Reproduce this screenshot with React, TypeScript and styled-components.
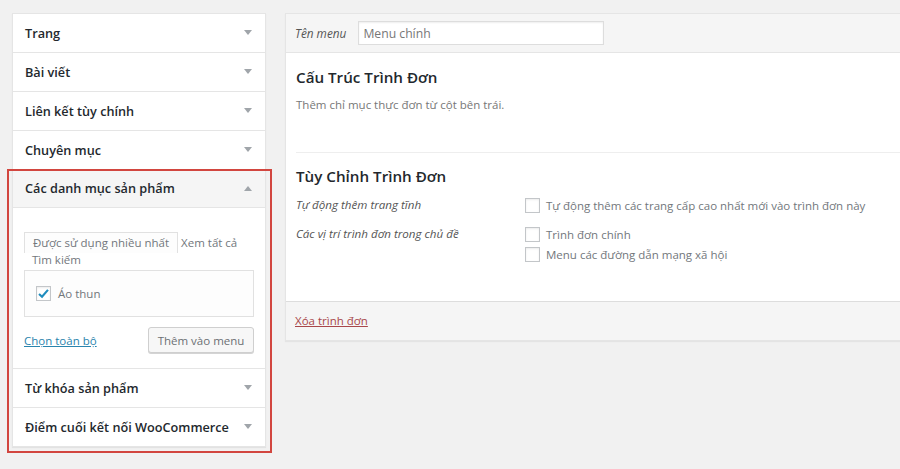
import React from "react";
import styled, { createGlobalStyle } from "styled-components";

const Global = createGlobalStyle`
  html, body { margin: 0; padding: 0; background: #f1f1f1; }
  body { font-family: "Open Sans", "Noto Sans", sans-serif; overflow: hidden; }
  * { box-sizing: border-box; }
`;

const Page = styled.div`
  width: 900px;
  height: 469px;
  overflow: hidden;
  display: flex;
  align-items: flex-start;
  gap: 19px;
  padding: 13px 0 0 12px;
  background: #f1f1f1;
`;

const LeftColumn = styled.div`
  position: relative;
  flex: 0 0 254px;
`;

const Accordion = styled.div`
  background: #fff;
  border: 1px solid #e5e5e5;
  box-shadow: 0 1px 1px rgba(0, 0, 0, 0.06);
`;

const Section = styled.div`
  border-bottom: 1px solid #e5e5e5;
  &:last-child { border-bottom: none; }
`;

const SectionHeader = styled.div<{ $open?: boolean }>`
  height: 38px;
  display: flex;
  align-items: center;
  justify-content: space-between;
  padding: 0 13px 1px 12px;
  background: ${(p) => (p.$open ? "#f5f5f5" : "#fff")};
  border-bottom: ${(p) => (p.$open ? "1px solid #e5e5e5" : "none")};
  font-size: 12.7px;
  font-weight: 600;
  color: #23282d;
  white-space: nowrap;
`;

const Arrow = styled.svg<{ $up?: boolean }>`
  width: 8px;
  height: 5px;
  transform: ${(p) => (p.$up ? "rotate(180deg)" : "none")};
  fill: #a0a5aa;
`;

const SectionBody = styled.div`
  height: 160px;
  padding: 26px 11px 0 11px;
`;

const Tabs = styled.div`
  font-size: 11.5px;
  line-height: 17px;
  padding-left: 8px;
  color: #72777c;
`;

const Tab = styled.span<{ $active?: boolean }>`
  white-space: nowrap;
  ${(p) =>
    p.$active
      ? `
    margin-left: -8px;
    padding: 2px 8px 3px 8px;
    border: 1px solid #e1e1e1;
    border-bottom: none;
    background: #fdfdfd;
  `
      : ""}
`;

const ListBox = styled.div`
  margin-top: 2px;
  height: 47px;
  border: 1px solid #e1e1e1;
  background: #fdfdfd;
  display: flex;
  align-items: center;
  padding-left: 11px;
  gap: 7px;
  font-size: 11.5px;
  color: #72777c;
`;

const CheckBox = styled.span`
  width: 15px;
  height: 15px;
  flex: 0 0 15px;
  border: 1px solid #c3c6c9;
  background: #fff;
  box-shadow: inset 0 1px 2px rgba(0, 0, 0, 0.08);
  display: inline-flex;
  align-items: center;
  justify-content: center;
`;

const ActionRow = styled.div`
  margin-top: 10px;
  display: flex;
  align-items: center;
  justify-content: space-between;
`;

const SelectAll = styled.a`
  font-size: 11.5px;
  color: #2a84ad;
  text-decoration: underline;
  cursor: pointer;
`;

const Button = styled.button`
  height: 26px;
  width: 106px;
  padding: 0;
  font-family: inherit;
  font-size: 11.5px;
  color: #6c7074;
  background: #f7f7f7;
  border: 1px solid #cfcfcf;
  border-radius: 3px;
  box-shadow: 0 1px 0 #d4d4d4;
`;

const Highlight = styled.div`
  position: absolute;
  left: -5px;
  top: 156px;
  width: 265px;
  height: 284px;
  border: 2px solid #d2463f;
  pointer-events: none;
`;

const MenuPanel = styled.div`
  flex: 0 0 640px;
  background: #fff;
  border: 1px solid #e5e5e5;
  box-shadow: 0 1px 1px rgba(0, 0, 0, 0.05);
`;

const MenuHeader = styled.div`
  height: 39px;
  display: flex;
  align-items: center;
  gap: 12px;
  padding-left: 9px;
  background: #f5f5f5;
  border-bottom: 1px solid #e5e5e5;
`;

const FieldLabel = styled.label`
  font-size: 11.8px;
  font-style: italic;
  color: #555;
`;

const NameInput = styled.input`
  width: 246px;
  height: 24px;
  border: 1px solid #ddd;
  box-shadow: inset 0 1px 2px rgba(0, 0, 0, 0.07);
  background: #fff;
  padding: 0 4px;
  font-family: inherit;
  font-size: 12.2px;
  color: #777;
  outline: none;
`;

const MenuBody = styled.div`
  padding: 0 10px;
`;

const Block = styled.div<{ $divided?: boolean }>`
  border-top: ${(p) => (p.$divided ? "1px solid #eee" : "none")};
  padding: ${(p) => (p.$divided ? "12px 0 37px" : "13px 0 38px")};
`;

const Heading = styled.h3`
  margin: 0;
  font-size: 15.2px;
  line-height: 22px;
  font-weight: 600;
  color: #23282d;
`;

const Description = styled.p`
  margin: 8px 0 0;
  font-size: 11.5px;
  line-height: 18px;
  color: #777;
`;

const SettingsGrid = styled.div`
  margin-top: 8px;
  display: grid;
  grid-template-columns: 229px 1fr;
  row-gap: 9px;
`;

const SettingLabel = styled.div`
  font-size: 11.6px;
  line-height: 20px;
  font-style: italic;
  color: #555;
`;

const Options = styled.div`
  display: flex;
  flex-direction: column;
`;

const Option = styled.div`
  height: 20px;
  display: flex;
  align-items: center;
  gap: 6px;
  font-size: 11.5px;
  color: #72777c;
`;

const MenuFooter = styled.div`
  height: 39px;
  border-top: 1px solid #ddd;
  background: #f5f5f5;
  display: flex;
  align-items: center;
  padding: 0 9px 2px;
`;

const DeleteLink = styled.a`
  font-size: 11.5px;
  color: #a8474a;
  text-decoration: underline;
  cursor: pointer;
`;

const ArrowIcon = ({ up }: { up?: boolean }) => (
  <Arrow $up={up} viewBox="0 0 8 5">
    <polygon points="0,0 8,0 4,5" />
  </Arrow>
);

const Check = ({ checked }: { checked?: boolean }) => (
  <CheckBox>
    {checked && (
      <svg width="13" height="13" viewBox="0 0 16 16">
        <path d="M2.5 8.5 L6.2 12 L13.5 3.5" stroke="#1e8cbe" strokeWidth="2.6" fill="none" />
      </svg>
    )}
  </CheckBox>
);

const closedTop = ["Trang", "Bài viết", "Liên kết tùy chính", "Chuyên mục"];
const closedBottom = ["Từ khóa sản phẩm", "Điểm cuối kết nối WooCommerce"];

export default function App() {
  return (
    <>
      <Global />
      <Page>
        <LeftColumn>
          <Accordion>
            {closedTop.map((t) => (
              <Section key={t}>
                <SectionHeader>
                  {t}
                  <ArrowIcon />
                </SectionHeader>
              </Section>
            ))}
            <Section>
              <SectionHeader $open>
                Các danh mục sản phẩm
                <ArrowIcon up />
              </SectionHeader>
              <SectionBody>
                <Tabs>
                  <Tab $active>Được sử dụng nhiều nhất</Tab>{" "}
                  <Tab>Xem tất cả</Tab>{" "}
                  <Tab>Tìm kiếm</Tab>
                </Tabs>
                <ListBox>
                  <Check checked />
                  Áo thun
                </ListBox>
                <ActionRow>
                  <SelectAll>Chọn toàn bộ</SelectAll>
                  <Button>Thêm vào menu</Button>
                </ActionRow>
              </SectionBody>
            </Section>
            {closedBottom.map((t) => (
              <Section key={t}>
                <SectionHeader>
                  {t}
                  <ArrowIcon />
                </SectionHeader>
              </Section>
            ))}
          </Accordion>
          <Highlight />
        </LeftColumn>

        <MenuPanel>
          <MenuHeader>
            <FieldLabel>Tên menu</FieldLabel>
            <NameInput defaultValue="Menu chính" />
          </MenuHeader>
          <MenuBody>
            <Block>
              <Heading>Cấu Trúc Trình Đơn</Heading>
              <Description>Thêm chỉ mục thực đơn từ cột bên trái.</Description>
            </Block>
            <Block $divided>
              <Heading>Tùy Chỉnh Trình Đơn</Heading>
              <SettingsGrid>
                <SettingLabel>Tự động thêm trang tĩnh</SettingLabel>
                <Options>
                  <Option>
                    <Check />
                    Tự động thêm các trang cấp cao nhất mới vào trình đơn này
                  </Option>
                </Options>
                <SettingLabel>Các vị trí trình đơn trong chủ đề</SettingLabel>
                <Options>
                  <Option>
                    <Check />
                    Trình đơn chính
                  </Option>
                  <Option>
                    <Check />
                    Menu các đường dẫn mạng xã hội
                  </Option>
                </Options>
              </SettingsGrid>
            </Block>
          </MenuBody>
          <MenuFooter>
            <DeleteLink>Xóa trình đơn</DeleteLink>
          </MenuFooter>
        </MenuPanel>
      </Page>
    </>
  );
}
